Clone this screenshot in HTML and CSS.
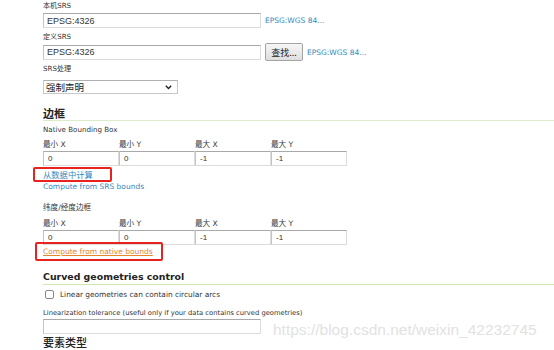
FILE: index.html
```html
<!DOCTYPE html>
<html lang="zh">
<head>
<meta charset="utf-8">
<link rel="stylesheet" href="styles.css">
</head>
<body>
<div class="page">
  <div class="lbl lbl-first">本机SRS</div>
  <div class="row">
    <input class="txt wide" type="text" value="EPSG:4326">
    <a class="link side">EPSG:WGS 84...</a>
  </div>
  <div class="lbl lbl-2">定义SRS</div>
  <div class="row row-btn">
    <input class="txt wide" type="text" value="EPSG:4326">
    <button class="btn" type="button">查找...</button>
    <a class="link side2">EPSG:WGS 84...</a>
  </div>
  <div class="lbl lbl-3">SRS处理</div>
  <div class="select">
    <span class="select-text">强制声明</span>
    <svg class="chev" width="7" height="5" viewBox="0 0 7 5"><path d="M0.8 0.8 L3.5 3.6 L6.2 0.8" fill="none" stroke="#222" stroke-width="1.4"/></svg>
  </div>

  <h3 class="head head-1">边框</h3>
  <div class="lbl lbl-nbb">Native Bounding Box</div>
  <div class="grid4 lbl-grid">
    <span>最小 X</span><span>最小 Y</span><span>最大 X</span><span>最大 Y</span>
  </div>
  <div class="grid4 box-grid">
    <input class="txt cell" type="text" value="0">
    <input class="txt cell" type="text" value="0">
    <input class="txt cell" type="text" value="-1">
    <input class="txt cell" type="text" value="-1">
  </div>
  <div class="linkline first-link"><a class="link cjk-link mark mark-1">从数据中计算</a></div>
  <div class="linkline"><a class="link en-link">Compute from SRS bounds</a></div>

  <div class="lbl lbl-ll">纬度/经度边框</div>
  <div class="grid4 lbl-grid lbl-grid-2">
    <span>最小 X</span><span>最小 Y</span><span>最大 X</span><span>最大 Y</span>
  </div>
  <div class="grid4 box-grid">
    <input class="txt cell" type="text" value="0">
    <input class="txt cell" type="text" value="0">
    <input class="txt cell" type="text" value="-1">
    <input class="txt cell" type="text" value="-1">
  </div>
  <div class="linkline native-line"><a class="link en-link orange mark mark-2">Compute from native bounds</a></div>

  <h3 class="head head-2">Curved geometries control</h3>
  <label class="check-row"><input class="cb" type="checkbox"><span>Linear geometries can contain circular arcs</span></label>
  <div class="lbl lbl-tol">Linearization tolerance (useful only if your data contains curved geometries)</div>
  <input class="txt wide tol" type="text" value="">
  <h3 class="head head-3">要素类型</h3>
</div>
<div class="watermark">https://blog.csdn.net/weixin_42232745</div>
</body>
</html>
```
FILE: styles.css
```css
* { box-sizing: border-box; }
html, body { margin: 0; padding: 0; background: #fff; }
body {
  width: 554px;
  height: 350px;
  overflow: hidden;
  position: relative;
  font-family: "DejaVu Sans", "Noto Sans CJK SC", sans-serif;
  font-size: 7.1px;
  color: #333;
}
.page { padding-left: 43px; }

.lbl { display: block; height: 12px; line-height: 12px; white-space: nowrap; }
.lbl-first { margin-top: 0; }
.lbl-2 { margin-top: 3px; }
.lbl-3 { margin-top: 2px; }

.row { display: flex; align-items: center; height: 15px; margin-top: 1px; }
.row-btn { height: 18px; margin-top: 0; }

.txt {
  height: 15px;
  margin: 0;
  padding: 0 3px;
  border: 1px solid #dcdcdc;
  border-top-color: #a9a9a9;
  border-left-color: #c4c4c4;
  background: #fff;
  font-family: "Liberation Sans", sans-serif;
  font-size: 9px;
  color: #333;
  outline: none;
}
.wide { width: 218px; }

.link { color: #3589bd; text-decoration: none; white-space: nowrap; }
.side { margin-left: 4px; font-size: 7.5px; }
.side2 { margin-left: 4px; font-size: 7.5px; }

.btn {
  height: 18px;
  width: 38px;
  margin: 0 0 0 4px;
  padding: 0;
  border: 1px solid #a4a4a4;
  border-radius: 2px;
  background: linear-gradient(#f6f6f6, #dedede);
  font-family: "Noto Sans CJK SC", sans-serif;
  font-size: 9px;
  color: #222;
}

.select {
  display: flex;
  align-items: center;
  justify-content: space-between;
  width: 135px;
  height: 14px;
  margin-top: 5px;
  padding: 0 5px 0 2px;
  border: 1px solid #c8c8c8;
  border-top-color: #b0b0b0;
  background: #fff;
}
.select-text { font-family: "Noto Sans CJK SC", sans-serif; font-size: 9.5px; color: #222; line-height: 12px; }
.chev { display: block; }

.head {
  margin: 0;
  padding: 0;
  font-weight: bold;
  color: #222;
  white-space: nowrap;
  border-bottom: 1px solid #dcebc9;
}
.head-1 {
  margin-top: 12px;
  height: 15px;
  line-height: 14px;
  font-family: "Noto Sans CJK SC", sans-serif;
  font-size: 11px;
}
.head-2 {
  margin-top: 12px;
  height: 15px;
  line-height: 14px;
  font-family: "DejaVu Sans", sans-serif;
  font-size: 9.4px;
  border-bottom-color: #d3e6b8;
}
.head-3 {
  margin-top: 2px;
  border-bottom: none;
  height: 13px;
  line-height: 13px;
  font-family: "Noto Sans CJK SC", sans-serif;
  font-size: 11px;
  font-weight: 500;
}

.lbl-nbb { margin-top: 3px; }

.grid4 { display: grid; grid-template-columns: 76px 76px 76px 76px; width: 304px; }
.lbl-grid { height: 12px; line-height: 12px; margin-top: 3px; color: #3c3c3c; font-size: 7.6px; }
.lbl-grid-2 { margin-top: 4px; }
.box-grid { height: 15px; }
.cell { width: 76px; font-size: 8px; padding: 0 4px; }

.linkline { height: 12px; line-height: 12px; margin-top: 1px; }
.first-link { margin-top: 2px; }
.cjk-link { font-family: "Noto Sans CJK SC", sans-serif; font-size: 8.3px; }
.en-link { font-size: 7.5px; }
.orange { color: #e5862e; text-decoration: underline; }

.mark { position: relative; display: inline-block; }
.mark::after {
  content: "";
  position: absolute;
  border: 2px solid #e8231f;
  border-radius: 2px;
  pointer-events: none;
}
.mark-1::after { left: -10px; right: -19px; top: -1px; bottom: -2px; }
.mark-2::after { left: -8px; right: -10px; top: -4px; bottom: -3px; }

.lbl-ll { margin-top: 9px; font-size: 7.6px; }
.native-line { margin-top: 1px; }

.check-row { display: flex; align-items: center; height: 12px; margin-top: 3px; white-space: nowrap; font-size: 7.4px; }
.cb {
  -webkit-appearance: none;
  appearance: none;
  width: 9px;
  height: 9px;
  margin: 0 6px 0 2px;
  border: 1px solid #8a8a8a;
  border-radius: 2px;
  background: #fff;
}
.lbl-tol { margin-top: 7px; font-size: 6.75px; }
.tol { display: block; }

.watermark {
  position: absolute;
  left: 273px;
  top: 321px;
  font-family: "Liberation Sans", sans-serif;
  font-size: 15.5px;
  color: #e2e2e2;
  white-space: nowrap;
  pointer-events: none;
}
```
